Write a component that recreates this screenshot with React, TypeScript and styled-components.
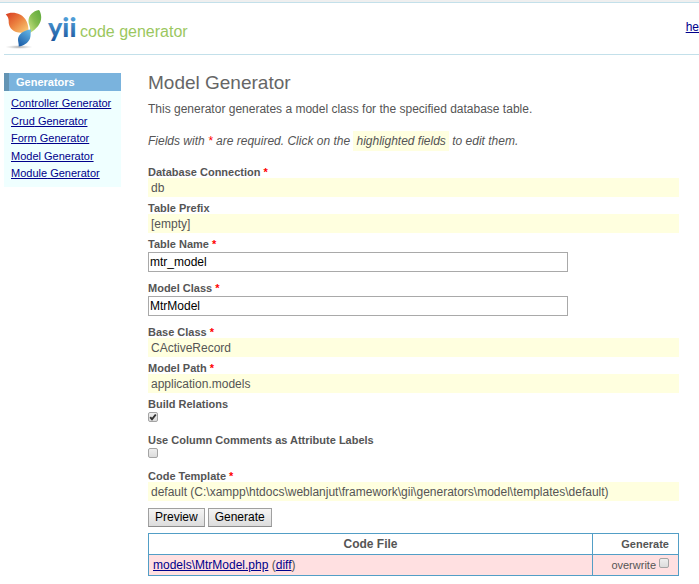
import React from "react";
import styled, { createGlobalStyle } from "styled-components";

const GlobalStyle = createGlobalStyle`
  * { box-sizing: border-box; }
  body {
    margin: 0;
    background: #fff;
    color: #555;
    font: 12px/18px "Liberation Sans", Arial, sans-serif;
    overflow-x: hidden;
  }
`;

const Page = styled.div`
  border-top: 2px solid #efefef;
`;

const PageBody = styled.div`
  border-top: 1px solid #c3e0ea;
  padding-left: 4px;
`;

const Header = styled.header`
  display: flex;
  justify-content: space-between;
  align-items: flex-start;
  height: 52px;
  border-bottom: 1px solid #c3e0ea;
`;

const Brand = styled.a`
  display: block;
  padding-top: 5px;
  text-decoration: none;
  svg { display: block; }
`;

const Link = styled.a`
  color: #00008b;
  text-decoration: underline;
`;

const TopNav = styled.nav`
  padding-top: 15px;
`;

const Columns = styled.div`
  display: flex;
  align-items: flex-start;
  gap: 27px;
  padding: 18px 20px 8px 0;
`;

const Sidebar = styled.aside`
  flex: none;
  width: 117px;
  background: #efffff;
`;

const SidebarTitle = styled.h2`
  margin: 0;
  padding-left: 7px;
  border-left: 5px solid #6394b4;
  background: #7ab3dd;
  color: #fff;
  font-size: 11px;
  line-height: 18px;
`;

const GeneratorList = styled.ul`
  display: flex;
  flex-direction: column;
  justify-content: space-between;
  height: 96px;
  margin: 0;
  padding: 4px 0 6px 7px;
  list-style: none;
  font-size: 11px;
  line-height: 16px;
`;

const Main = styled.main`
  flex: 1;
  min-width: 0;
`;

const Title = styled.h1`
  margin: 0;
  color: #666;
  font-size: 19px;
  font-weight: 400;
  line-height: 20px;
`;

const Paragraph = styled.p`
  margin: 0;
  padding-top: 7px;
`;

const Note = styled.p`
  margin: 0;
  padding: 14px 0 15px;
  font-style: italic;
`;

const Highlight = styled.span`
  padding: 3px;
  background: #ffffe0;
`;

const Star = styled.span`
  color: #f00;
`;

const Row = styled.div<{ $input?: boolean }>`
  display: flex;
  flex-direction: column;
  align-items: flex-start;
  height: ${(p) => (p.$input ? 44 : 36)}px;
`;

const Label = styled.label`
  height: 13px;
  font-size: 11px;
  font-weight: 700;
  line-height: 15px;
`;

const Value = styled.output`
  display: block;
  width: 100%;
  height: 19px;
  padding-left: 3px;
  background: #ffffdf;
  line-height: 20px;
`;

const TextInput = styled.input`
  width: 420px;
  max-width: 100%;
  height: 20px;
  margin: 2px 0 0;
  padding: 0 1px;
  border: 1px solid #a9a9a9;
  background: #fff;
  color: #000;
  font: inherit;
`;

const Check = styled.input`
  appearance: none;
  width: 10px;
  height: 10px;
  margin: 0;
  border: 1px solid #a4a4a4;
  border-radius: 2px;
  background: linear-gradient(#eee, #dcdcdc);
  grid-area: 1 / 1;
`;

const CheckWrap = styled.span<{ $cell?: boolean }>`
  display: inline-grid;
  align-content: start;
  padding-top: ${(p) => (p.$cell ? 3 : 2)}px;
  margin-left: ${(p) => (p.$cell ? 3 : 0)}px;
  svg {
    grid-area: 1 / 1;
    display: none;
    pointer-events: none;
    z-index: 1;
  }
  input:checked + svg { display: block; }
`;

const Actions = styled.div`
  display: flex;
  gap: 3px;
  padding: 3px 0 6px;
`;

const Button = styled.button`
  height: 19px;
  padding: 0 6px;
  border: 1px solid #a0a0a0;
  border-bottom-color: #8c8c8c;
  background: linear-gradient(#f5f5f5, #dcdcdc);
  color: #000;
  font: 12px/17px "Liberation Sans", Arial, sans-serif;
`;

const Files = styled.table`
  width: 100%;
  border-collapse: collapse;
  th, td {
    height: 21px;
    padding: 0 4px;
    border: 1px solid #529ec6;
    line-height: 20px;
  }
  td { background: #ffe0e1; }
  th:last-child, td:last-child {
    width: 86px;
    padding-right: 9px;
    font-size: 11px;
    text-align: right;
  }
`;

const CellLabel = styled.label`
  display: flex;
  justify-content: flex-end;
`;

function CheckBox({ cell, ...rest }: { cell?: boolean; id?: string; defaultChecked?: boolean }) {
  return (
    <CheckWrap $cell={cell}>
      <Check type="checkbox" {...rest} />
      <svg width="10" height="10" viewBox="0 0 10 10" fill="none" aria-hidden="true">
        <path d="M2.2 5.2 4 7.3 7.8 2.5" stroke="#333" strokeWidth="2" />
      </svg>
    </CheckWrap>
  );
}

function Logo() {
  return (
    <svg width="188" height="42" viewBox="4 8 188 42" role="img" aria-label="yii code generator">
      <defs>
        <linearGradient id="red" x1="0" y1="0" x2="1" y2="1">
          <stop offset="0" stopColor="#d83a20" />
          <stop offset="0.5" stopColor="#ec8441" />
          <stop offset="1" stopColor="#fbd47c" />
        </linearGradient>
        <linearGradient id="green" x1="1" y1="0" x2="0" y2="1">
          <stop offset="0" stopColor="#5ba83a" />
          <stop offset="0.5" stopColor="#86bd50" />
          <stop offset="1" stopColor="#d5e98c" />
        </linearGradient>
        <linearGradient id="blue" x1="0.8" y1="0" x2="0.2" y2="1">
          <stop offset="0" stopColor="#62b4e4" />
          <stop offset="1" stopColor="#1b5da8" />
        </linearGradient>
        <linearGradient id="word" gradientUnits="userSpaceOnUse" x1="0" y1="16" x2="0" y2="43">
          <stop offset="0" stopColor="#54a5dd" />
          <stop offset="1" stopColor="#174f98" />
        </linearGradient>
        <radialGradient id="shade">
          <stop offset="0" stopColor="#888" stopOpacity="0.75" />
          <stop offset="1" stopColor="#bbb" stopOpacity="0" />
        </radialGradient>
      </defs>
      <ellipse cx="19" cy="47" rx="14" ry="2" fill="url(#shade)" />
      <path d="M5.7 14.5C9 12.300 15 12 20 14.500C26 17.500 29 24 28.500 33C25.500 32 20 33.500 16 32C10 29.500 8.500 25 8.700 21C8.700 18 7.500 16 5.700 14.500Z" fill="url(#red)" />
      <path d="M39 10C33 11 28.500 15.500 28.500 21C28.500 25 31 27 30 33C36 29.500 41.500 23.500 41.200 17C41 14 40.300 11.500 39 10Z" fill="url(#green)" />
      <path d="M31 29.500C24 30 18.500 34 18 39C17.800 41.500 19 43.500 18.700 46.500C23 46 28.500 43 30 38.500C31 35.500 30.300 33 31 29.500Z" fill="url(#blue)" />
      <text x="48" y="37" fill="url(#word)" fontFamily="Lato, 'Liberation Sans', sans-serif" fontSize="27" fontWeight="900">yii</text>
      <text x="80" y="37" fill="#9bc75f" fontFamily="'Liberation Sans', sans-serif" fontSize="16">code generator</text>
    </svg>
  );
}

const generators = ["Controller", "Crud", "Form", "Model", "Module"];

type Field = { id: string; label: string; kind: "value" | "text" | "check"; value?: string; required?: boolean; checked?: boolean };

const fields: Field[] = [
  { id: "connection", label: "Database Connection", kind: "value", value: "db", required: true },
  { id: "prefix", label: "Table Prefix", kind: "value", value: "[empty]" },
  { id: "table", label: "Table Name", kind: "text", value: "mtr_model", required: true },
  { id: "model", label: "Model Class", kind: "text", value: "MtrModel", required: true },
  { id: "base", label: "Base Class", kind: "value", value: "CActiveRecord", required: true },
  { id: "path", label: "Model Path", kind: "value", value: "application.models", required: true },
  { id: "relations", label: "Build Relations", kind: "check", checked: true },
  { id: "comments", label: "Use Column Comments as Attribute Labels", kind: "check" },
  { id: "template", label: "Code Template", kind: "value", value: "default (C:\\xampp\\htdocs\\weblanjut\\framework\\gii\\generators\\model\\templates\\default)", required: true },
];

function FieldRow({ id, label, kind, value, required, checked }: Field) {
  return (
    <Row $input={kind === "text"}>
      <Label htmlFor={id}>
        {label}
        {required && <> <Star>*</Star></>}
      </Label>
      {kind === "value" && <Value id={id}>{value}</Value>}
      {kind === "text" && <TextInput id={id} type="text" defaultValue={value} />}
      {kind === "check" && <CheckBox id={id} defaultChecked={checked} />}
    </Row>
  );
}

export default function App() {
  return (
    <Page>
      <GlobalStyle />
      <PageBody>
        <Header>
          <Brand href="#"><Logo /></Brand>
          <TopNav><Link href="#">he</Link></TopNav>
        </Header>
        <Columns>
          <Sidebar>
            <SidebarTitle>Generators</SidebarTitle>
            <GeneratorList>
              {generators.map((name) => (
                <li key={name}><Link href="#">{name} Generator</Link></li>
              ))}
            </GeneratorList>
          </Sidebar>
          <Main>
            <Title>Model Generator</Title>
            <Paragraph>This generator generates a model class for the specified database table.</Paragraph>
            <Note>
              Fields with <Star>*</Star> are required. Click on the <Highlight>highlighted fields</Highlight> to edit them.
            </Note>
            <form onSubmit={(e) => e.preventDefault()}>
              {fields.map((f) => <FieldRow key={f.id} {...f} />)}
              <Actions>
                <Button type="submit">Preview</Button>
                <Button type="submit">Generate</Button>
              </Actions>
              <Files>
                <thead>
                  <tr><th>Code File</th><th>Generate</th></tr>
                </thead>
                <tbody>
                  <tr>
                    <td><Link href="#">models\MtrModel.php</Link> (<Link href="#">diff</Link>)</td>
                    <td><CellLabel>overwrite<CheckBox cell /></CellLabel></td>
                  </tr>
                </tbody>
              </Files>
            </form>
          </Main>
        </Columns>
      </PageBody>
    </Page>
  );
}
